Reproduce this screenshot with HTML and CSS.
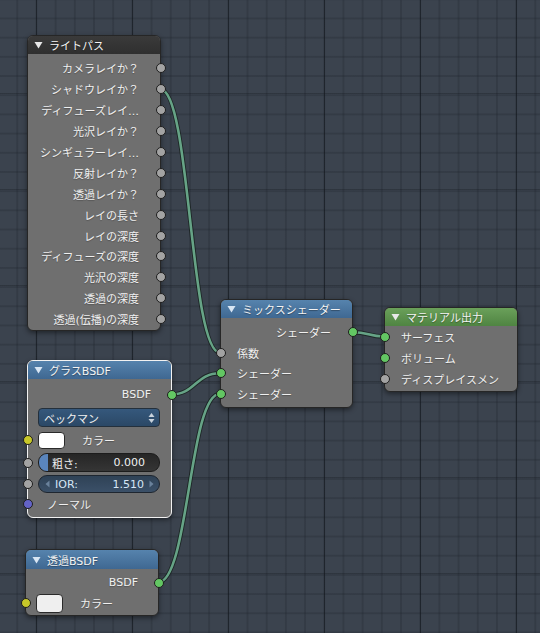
FILE: index.html
```html
<!DOCTYPE html>
<html lang="ja">
<head>
<meta charset="utf-8">
<title>Node Editor</title>
<link rel="stylesheet" href="styles.css">
</head>
<body>
<div class="canvas">
  <svg class="links" width="540" height="633" viewBox="0 0 540 633">
    <g class="wire-under">
      <path d="M160.5 89.4 C190.5 89.4 190 352.7 220 352.7"/>
      <path d="M171 394.5 C195.5 394.5 195.5 373.2 220 373.2"/>
      <path d="M158 582.5 C189 582.5 189 393.7 220 393.7"/>
      <path d="M353 332.2 C368.5 332.2 368.5 336.5 384 336.5"/>
    </g>
    <g class="wire">
      <path d="M160.5 89.4 C190.5 89.4 190 352.7 220 352.7"/>
      <path d="M171 394.5 C195.5 394.5 195.5 373.2 220 373.2"/>
      <path d="M158 582.5 C189 582.5 189 393.7 220 393.7"/>
      <path d="M353 332.2 C368.5 332.2 368.5 336.5 384 336.5"/>
    </g>
  </svg>

  <!-- Light Path -->
  <div class="node n-light">
    <div class="head head-dark">
      <svg class="tri" width="9" height="8" viewBox="0 0 9 8"><polygon points="0.5,1 8.5,1 4.5,7.5"/></svg>
      <span>ライトパス</span>
    </div>
    <div class="body body-light">
      <div class="row out">カメラレイか？<i class="sock gray"></i></div>
      <div class="row out">シャドウレイか？<i class="sock gray"></i></div>
      <div class="row out">ディフューズレイ…<i class="sock gray"></i></div>
      <div class="row out">光沢レイか？<i class="sock gray"></i></div>
      <div class="row out">シンギュラーレイ…<i class="sock gray"></i></div>
      <div class="row out">反射レイか？<i class="sock gray"></i></div>
      <div class="row out">透過レイか？<i class="sock gray"></i></div>
      <div class="row out">レイの長さ<i class="sock gray"></i></div>
      <div class="row out">レイの深度<i class="sock gray"></i></div>
      <div class="row out">ディフューズの深度<i class="sock gray"></i></div>
      <div class="row out">光沢の深度<i class="sock gray"></i></div>
      <div class="row out">透過の深度<i class="sock gray"></i></div>
      <div class="row out">透過(伝播)の深度<i class="sock gray"></i></div>
    </div>
  </div>

  <!-- Mix Shader -->
  <div class="node n-mix">
    <div class="head head-blue">
      <svg class="tri" width="9" height="8" viewBox="0 0 9 8"><polygon points="0.5,1 8.5,1 4.5,7.5"/></svg>
      <span>ミックスシェーダー</span>
    </div>
    <div class="body body-mix">
      <div class="row out">シェーダー<i class="sock green"></i></div>
      <div class="row in"><i class="sock gray"></i>係数</div>
      <div class="row in"><i class="sock green"></i>シェーダー</div>
      <div class="row in"><i class="sock green"></i>シェーダー</div>
    </div>
  </div>

  <!-- Material Output -->
  <div class="node n-out">
    <div class="head head-green">
      <svg class="tri" width="9" height="8" viewBox="0 0 9 8"><polygon points="0.5,1 8.5,1 4.5,7.5"/></svg>
      <span>マテリアル出力</span>
    </div>
    <div class="body body-out">
      <div class="row in"><i class="sock green"></i>サーフェス</div>
      <div class="row in"><i class="sock green"></i>ボリューム</div>
      <div class="row in"><i class="sock gray"></i>ディスプレイスメン</div>
    </div>
  </div>

  <!-- Glass BSDF -->
  <div class="node n-glass">
    <div class="head head-blue">
      <svg class="tri" width="9" height="8" viewBox="0 0 9 8"><polygon points="0.5,1 8.5,1 4.5,7.5"/></svg>
      <span>グラスBSDF</span>
    </div>
    <div class="body body-glass">
      <div class="row out bsdf">BSDF<i class="sock green"></i></div>
      <div class="dropdown">
        <span>ベックマン</span>
        <svg width="7" height="12" viewBox="0 0 7 12"><polygon points="3.5,1 6.5,5 0.5,5"/><polygon points="0.5,7 6.5,7 3.5,11"/></svg>
      </div>
      <div class="row color-row"><i class="sock yellow"></i><span class="swatch"></span><span class="clabel">カラー</span></div>
      <div class="field-row"><i class="sock gray"></i>
        <div class="slider"><span class="fill"></span><span class="flabel">粗さ:</span><span class="fval">0.000</span></div>
      </div>
      <div class="field-row"><i class="sock gray"></i>
        <div class="numfield">
          <svg class="arr" width="5" height="8" viewBox="0 0 5 8"><polygon points="4.5,0.5 4.5,7.5 0.5,4"/></svg>
          <span class="flabel">IOR:</span><span class="fval">1.510</span>
          <svg class="arr" width="5" height="8" viewBox="0 0 5 8"><polygon points="0.5,0.5 0.5,7.5 4.5,4"/></svg>
        </div>
      </div>
      <div class="row in normal"><i class="sock purple"></i>ノーマル</div>
    </div>
  </div>

  <!-- Transparent BSDF -->
  <div class="node n-trans">
    <div class="head head-blue">
      <svg class="tri" width="9" height="8" viewBox="0 0 9 8"><polygon points="0.5,1 8.5,1 4.5,7.5"/></svg>
      <span>透過BSDF</span>
    </div>
    <div class="body body-trans">
      <div class="row out bsdf2">BSDF<i class="sock green"></i></div>
      <div class="row color-row2"><i class="sock yellow"></i><span class="swatch swatch2"></span><span class="clabel">カラー</span></div>
    </div>
  </div>
</div>
</body>
</html>
```

FILE: styles.css
```css
* { box-sizing: border-box; }
html, body { margin: 0; padding: 0; }
body {
  width: 540px;
  height: 633px;
  overflow: hidden;
  font-family: "DejaVu Sans", "Noto Sans CJK JP", sans-serif;
  font-size: 11px;
  color: #f0f0f0;
}
.canvas {
  position: relative;
  width: 540px;
  height: 633px;
  background-color: #3b434e;
  background-image:
    linear-gradient(90deg, rgba(18,22,28,0.6) 1px, transparent 1px),
    linear-gradient(rgba(18,22,28,0.3) 1px, transparent 1px),
    linear-gradient(90deg, rgba(25,30,38,0.22) 2px, transparent 2px),
    linear-gradient(rgba(25,30,38,0.22) 2px, transparent 2px);
  background-size: 96px 96px, 96px 96px, 19.2px 19.2px, 19.2px 19.2px;
  background-position: 36px 0, 0 93px, 16.3px 0, 0 17.5px;
}
.links { position: absolute; left: 0; top: 0; }
.links path { fill: none; }
.wire-under path { stroke: rgba(20,30,26,0.75); stroke-width: 4.4; }
.wire path { stroke: #66a386; stroke-width: 2.6; }

.node {
  position: absolute;
  border: 1px solid #262626;
  border-radius: 6px;
  background: #6f6f6f;
  box-shadow: 0 2px 5px rgba(0,0,0,0.45);
}
.n-light { left: 27px; top: 35px; width: 134px; }
.n-mix { left: 220px; top: 299px; width: 133px; }
.n-out { left: 384px; top: 307px; width: 134px; }
.n-glass { left: 27px; top: 360px; width: 145px; border-color: #f2f2f2; }
.n-trans { left: 25px; top: 549px; width: 134px; }

.head {
  height: 18px;
  display: flex;
  align-items: center;
  gap: 6px;
  padding-left: 6px;
  border-radius: 5px 5px 0 0;
  color: #f4f4f4;
  text-shadow: 0 1px 1px rgba(0,0,0,0.35);
}
.tri { fill: #e8e8e8; flex: none; }
.head-dark { background: linear-gradient(#3a3a3a, #2f2f2f); }
.head-blue { background: linear-gradient(#5683ad, #3f6892); }
.head-blue .tri { fill: #d8e6f4; }
.head-green { background: linear-gradient(#6aa05a, #4f8442); }
.n-trans .head { height: 19px; }

.body { display: flex; flex-direction: column; }
.body-light { padding: 4px 0 0; }
.body-light .row { height: 20.9px; }
.body-mix { padding: 4px 0 3px; }
.body-mix .row { height: 20.5px; }
.body-out { padding: 0 0 2px; }
.body-out .row { height: 21px; }

.row {
  position: relative;
  display: flex;
  align-items: center;
  height: 21px;
  white-space: nowrap;
  text-shadow: 0 1px 1px rgba(0,0,0,0.25);
}
.row.out { justify-content: flex-end; padding-right: 21px; }
.row.in { padding-left: 16px; }

.sock {
  position: absolute;
  top: 50%;
  width: 10px;
  height: 10px;
  margin-top: -5px;
  border-radius: 50%;
  border: 1px solid #1e1e1e;
}
.row.out .sock { right: -5.5px; }
.row.in .sock, .field-row .sock, .color-row .sock, .color-row2 .sock { left: -5.5px; }
.sock.gray { background: #a3a3a3; }
.sock.green { background: #63c763; }
.sock.yellow { background: #c7c729; }
.sock.purple { background: #6363c7; }

/* Glass */
.body-glass { padding: 0 0 3px; }
.bsdf { margin-top: 5px; padding-right: 20px !important; }
.dropdown {
  margin: 3px 11px 0 10px;
  height: 19px;
  border-radius: 4px;
  border: 1px solid #24303c;
  background: linear-gradient(#35587c, #2b4866);
  display: flex;
  align-items: center;
  justify-content: space-between;
  padding: 0 4px 0 5px;
  color: #f0f0f0;
}
.dropdown svg { fill: #c8d2dc; }
.color-row { margin-top: 4px; height: 18px; padding-left: 10px; gap: 0; }
.swatch {
  width: 27px;
  height: 17px;
  background: #ffffff;
  border: 1px solid #2a2a2a;
  border-radius: 4px;
}
.clabel { margin-left: 17px; }
.field-row {
  position: relative;
  display: flex;
  align-items: center;
  padding: 0 11px 0 10px;
}
.field-row:nth-of-type(4) { margin-top: 4px; }
.field-row:nth-of-type(5) { margin-top: 3px; }
.slider {
  position: relative;
  flex: 1;
  height: 19px;
  border-radius: 9px;
  border: 1px solid #1c1c1c;
  background: linear-gradient(#262626, #353535);
  display: flex;
  align-items: center;
  padding: 0 14px 0 13px;
  overflow: hidden;
}
.slider .fill {
  position: absolute;
  left: 0; top: 0; bottom: 0;
  width: 9px;
  background: #5a85bd;
}
.flabel { position: relative; flex: 1; }
.fval { position: relative; }
.numfield {
  flex: 1;
  height: 18px;
  border-radius: 9px;
  border: 1px solid #1e2630;
  background: linear-gradient(#2f4256, #3b5068);
  display: flex;
  align-items: center;
  gap: 5px;
  padding: 0 5px 0 6px;
  color: #d6e6f6;
}
.numfield .arr { fill: #6a829c; flex: none; }
.normal { padding-left: 19px !important; }

/* Transparent */
.body-trans { padding: 0 0 2px; }
.bsdf2 { margin-top: 3px; padding-right: 20px !important; }
.color-row2 { height: 20px; padding-left: 10px; }
.swatch2 { width: 27px; height: 19px; background: #efefef; }
```
